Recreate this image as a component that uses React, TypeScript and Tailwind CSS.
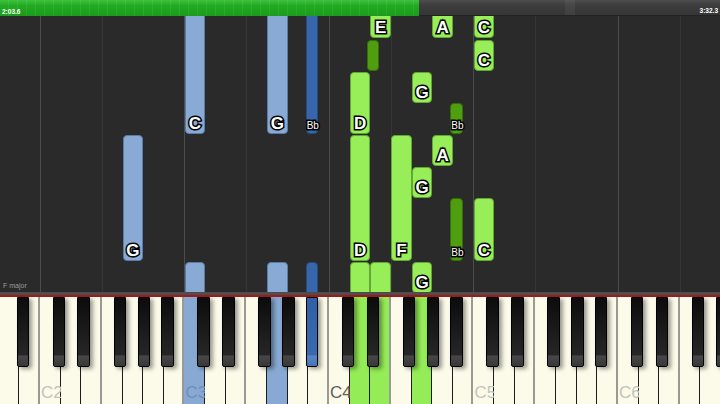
import React from "react";
import clsx from "clsx";

const W = 20.65;
const X0 = -1.3;
const NAMES = ["A", "B", "C", "D", "E", "F", "G"];
// black key offset from the boundary after the given white key
const BLACK_OFF: Record<string, number> = { C: -1.8, D: 2.4, F: -2.8, G: 0.6, A: 3.5 };
const BW = 12.5;

const whiteKeys = Array.from({ length: 35 }, (_, i) => {
  const name = NAMES[i % 7];
  const octave = i < 2 ? 1 : Math.floor((i - 2) / 7) + 2;
  return { i, name, octave };
});

const whiteLeft = (i: number) => X0 + i * W;
const blackLeft = (i: number) => X0 + (i + 1) * W + BLACK_OFF[NAMES[i % 7]] - BW / 2;

type Tone = "blue" | "darkBlue" | "green" | "darkGreen";

interface Note {
  key: number;
  black?: boolean;
  top: number;
  bottom: number;
  tone: Tone;
  label?: string;
}

// page y coords, roll starts at y=16
const notes: Note[] = [
  { key: 9, top: -4, bottom: 134, tone: "blue", label: "C" },
  { key: 13, top: -4, bottom: 134, tone: "blue", label: "G" },
  { key: 14, black: true, top: -4, bottom: 134, tone: "darkBlue", label: "Bb" },
  { key: 6, top: 135, bottom: 261, tone: "blue", label: "G" },
  { key: 9, top: 262, bottom: 320, tone: "blue" },
  { key: 13, top: 262, bottom: 320, tone: "blue" },
  { key: 14, black: true, top: 262, bottom: 320, tone: "darkBlue" },

  { key: 18, top: -4, bottom: 38, tone: "green", label: "E" },
  { key: 21, top: -4, bottom: 38, tone: "green", label: "A" },
  { key: 23, top: -4, bottom: 38, tone: "green", label: "C" },
  { key: 17, black: true, top: 40, bottom: 71, tone: "darkGreen" },
  { key: 23, top: 40, bottom: 70.5, tone: "green", label: "C" },
  { key: 20, top: 71.7, bottom: 103.3, tone: "green", label: "G" },
  { key: 17, top: 72, bottom: 134, tone: "green", label: "D" },
  { key: 21, black: true, top: 102.7, bottom: 134, tone: "darkGreen", label: "Bb" },
  { key: 21, top: 135, bottom: 166, tone: "green", label: "A" },
  { key: 17, top: 135, bottom: 261, tone: "green", label: "D" },
  { key: 19, top: 135, bottom: 261, tone: "green", label: "F" },
  { key: 20, top: 167, bottom: 198, tone: "green", label: "G" },
  { key: 21, black: true, top: 198, bottom: 261, tone: "darkGreen", label: "Bb" },
  { key: 23, top: 198, bottom: 261, tone: "green", label: "C" },
  { key: 20, top: 262, bottom: 293, tone: "green", label: "G" },
  { key: 17, top: 262, bottom: 320, tone: "green" },
  { key: 18, top: 262, bottom: 320, tone: "green" },
];

const toneClass: Record<Tone, string> = {
  blue: "bg-[#88aad4] border-[#5b7ca6]",
  darkBlue: "bg-[#3866ab] border-[#264a82]",
  green: "bg-[#98ee59] border-[#62a834]",
  darkGreen: "bg-[#4f9e0f] border-[#357006]",
};

const litWhite: Record<number, string> = {
  9: "bg-[#87a9d3]",
  13: "bg-[#87a9d3]",
  17: "bg-[#94ec56]",
  18: "bg-[#94ec56]",
  20: "bg-[#94ec56]",
};

function NoteBar({ n }: { n: Note }) {
  const left = n.black ? blackLeft(n.key) : whiteLeft(n.key);
  const width = n.black ? BW : W;
  const small = n.label === "Bb";
  return (
    <div
      className={clsx("absolute rounded-[4px] border", toneClass[n.tone])}
      style={{ left, width, top: n.top - 16, height: n.bottom - n.top }}
    >
      {n.label && (
        <span
          className={clsx(
            "absolute inset-x-0 text-center leading-none font-bold text-white [-webkit-text-stroke:3px_#000] [paint-order:stroke_fill]",
            small ? "bottom-[2px] text-[10px] font-normal [-webkit-text-stroke:2px_#000]" : "bottom-[1px] text-[17px]"
          )}
        >
          {n.label}
        </span>
      )}
    </div>
  );
}

function Header() {
  return (
    <div className="flex h-[16px] shrink-0">
      <div className="relative w-[419px] [background-image:repeating-linear-gradient(to_right,transparent_0,transparent_8px,rgba(255,255,255,0.07)_8px,rgba(255,255,255,0.07)_9px),linear-gradient(#3fc23f,#22aa22_35%,#1b9c1b)]">
        <span className="absolute left-[2px] bottom-[1px] text-[6.5px] leading-none font-bold text-white">
          2:03.6
        </span>
      </div>
      <div className="relative flex-1 border-b border-[#222] [background-image:linear-gradient(#4d4d4d,#3d3d3d_35%,#363636)]">
        <div className="absolute left-[146px] top-0 h-full w-[10px] bg-white/5" />
        <span className="absolute right-[2px] bottom-[1px] text-[6.5px] leading-none font-bold text-white">
          3:32.3
        </span>
      </div>
    </div>
  );
}

function Roll() {
  return (
    <div className="relative h-[276px] shrink-0 overflow-hidden bg-[#2a2a2a]">
      <div className="absolute inset-y-0 left-[-1.3px] flex">
        {whiteKeys.map((k) => (
          <div
            key={k.i}
            className={clsx(
              "h-full shrink-0",
              k.name === "C" && "border-l border-[#4c4c4c]",
              k.name === "F" && "border-l border-[#363636]"
            )}
            style={{ width: W }}
          />
        ))}
      </div>
      {notes.map((n, idx) => (
        <NoteBar key={idx} n={n} />
      ))}
      <span className="absolute left-[3px] bottom-[3px] text-[7px] leading-none text-[#9c9c9c]">F major</span>
    </div>
  );
}

function Keyboard() {
  return (
    <div className="relative flex-1 overflow-hidden bg-[#fcfbea]">
      <div className="absolute inset-y-0 left-[-1.3px] flex">
        {whiteKeys.map((k) => (
          <div
            key={k.i}
            className={clsx(
              "relative h-full shrink-0",
              litWhite[k.i] ?? "bg-[#fcfbea]",
              k.name === "B" || k.name === "E" ? "border-r-2 border-[#9a9a94]" : "border-r border-[#1c1c1c]"
            )}
            style={{ width: W }}
          >
            {k.name === "C" && (
              <span
                className={clsx(
                  "absolute left-[1px] bottom-[3px] text-[17px] leading-none",
                  k.octave === 4 ? "text-[#5e5e5e]" : k.octave === 3 ? "text-[#6f8fb9]" : "text-[#c3c3bb]"
                )}
              >
                C{k.octave}
              </span>
            )}
          </div>
        ))}
      </div>
      {whiteKeys
        .filter((k) => BLACK_OFF[k.name] !== undefined)
        .map((k) => {
          const lit = k.i === 14;
          return (
            <div
              key={k.i}
              className={clsx(
                "absolute top-0 h-[70px] rounded-b-[2px] border border-black shadow-[3px_2px_4px_rgba(0,0,0,0.4)]",
                lit
                  ? "[background-image:linear-gradient(#3060a6,#3a69b0_84%,#5985c6_85%,#4674b8)]"
                  : "[background-image:linear-gradient(#0c0c0c,#262626_84%,#474747_85%,#383838)]"
              )}
              style={{ left: blackLeft(k.i), width: BW }}
            />
          );
        })}
    </div>
  );
}

export default function App() {
  return (
    <div className="flex h-[404px] w-[720px] flex-col overflow-hidden bg-[#2a2a2a] font-['Liberation_Sans',Arial,sans-serif]">
      <Header />
      <Roll />
      <div className="h-[3px] shrink-0 bg-[#4e4e4e]" />
      <div className="h-[2px] shrink-0 bg-[#a3161a]" />
      <Keyboard />
    </div>
  );
}
